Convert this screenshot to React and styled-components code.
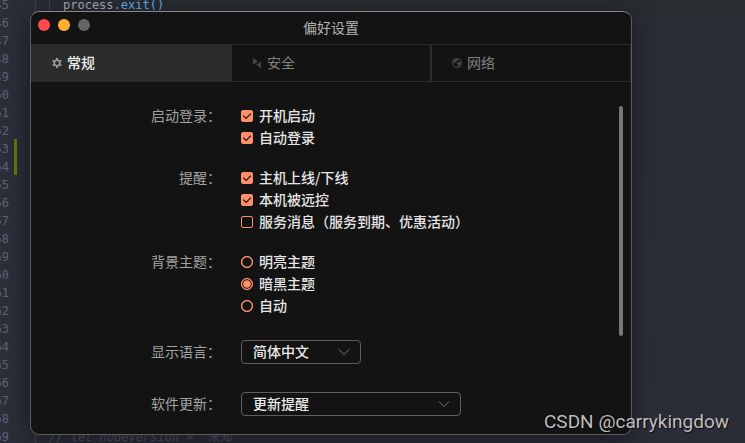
import React, { useState } from 'react';
import styled, { createGlobalStyle } from 'styled-components';

const GlobalStyle = createGlobalStyle`
  * {
    box-sizing: border-box;
  }
  body {
    margin: 0;
    background: #2a2d37;
    font-family: "Noto Sans CJK SC", sans-serif;
    font-size: 14px;
  }
`;

const Desktop = styled.main`
  position: relative;
  min-height: 100vh;
  padding: 11px 113px 8px 30px;
  overflow: hidden;
  background: linear-gradient(180deg, #292c31 0%, #2a2d36 60%, #2a2c37 100%);
`;

/* editor behind the window */
const Editor = styled.div`
  position: absolute;
  inset: -5px 0 0 0;
  overflow: hidden;
  background: linear-gradient(90deg, #2b2f3a 0, #282c34 30px, transparent 60px);
  font-family: "DejaVu Sans Mono", "Noto Sans CJK SC", monospace;
  font-size: 12px;
`;

const Line = styled.div`
  display: flex;
  height: 18px;
  line-height: 20px;
  white-space: pre;
`;

const LineNumber = styled.span`
  display: flex;
  flex: none;
  justify-content: flex-end;
  width: 9px;
  color: #5a637c;
`;

const ChangeMark = styled.span`
  flex: none;
  width: 3px;
  margin: 0 18px 0 5px;
  background: ${props => (props.$changed ? '#587c0c' : 'transparent')};
`;

const Indent = styled.span`
  flex: none;
  width: 14px;
  border-left: 1px solid #3a404b;
`;

const Code = styled.code`
  font-family: inherit;
  color: ${props => props.$color || '#a4abb8'};
  font-style: ${props => (props.$comment ? 'italic' : 'normal')};
`;

const Window = styled.section`
  position: relative;
  overflow: hidden;
  background: #131313;
  border: 1px solid #5c5c5c;
  border-top-color: #868686;
  border-radius: 9px;
`;

const Shadow = styled.div`
  position: relative;
  border-radius: 9px;
  box-shadow: 0 4px 24px rgba(0, 0, 0, 0.4);
`;

const TitleBar = styled.header`
  display: grid;
  grid-template-columns: 1fr auto 1fr;
  align-items: start;
  height: 32px;
  padding: 7px;
`;

const Lights = styled.div`
  display: flex;
  gap: 8px;
`;

const Light = styled.button`
  width: 12px;
  height: 12px;
  padding: 0;
  border: 0;
  border-radius: 50%;
  background: ${props => props.$color};
`;

const Title = styled.h1`
  margin: 0;
  color: #b4b4b4;
  font-size: 14px;
  font-weight: 400;
  line-height: 16px;
`;

const Tabs = styled.nav`
  display: grid;
  grid-template-columns: repeat(3, 1fr);
`;

const Tab = styled.button`
  display: flex;
  align-items: center;
  gap: 5px;
  height: 38px;
  padding: 0 20px;
  border: 1px solid #2b2b2b;
  background: ${props => (props.$active ? '#2b2b2b' : 'transparent')};
  color: ${props => (props.$active ? '#ececec' : '#808080')};
  font-family: inherit;
  font-size: 14px;
  font-weight: ${props => (props.$active ? 500 : 400)};

  svg {
    flex: none;
    color: ${props => (props.$active ? '#9a9a9a' : '#444')};
  }
`;

const Text = styled.span`
  padding-bottom: 2px;
  line-height: 20px;
`;

const Body = styled.div`
  display: flex;
  padding: 23px 8px 13px 0;
`;

const Form = styled.form`
  display: flex;
  flex: 1;
  flex-direction: column;
  gap: 18px;
`;

const Group = styled.div`
  display: grid;
  grid-template-columns: 190px 1fr;
  column-gap: 20px;
  min-height: 34px;
  align-items: ${props => (props.$center ? 'center' : 'start')};
`;

const GroupLabel = styled.label`
  padding-bottom: 2px;
  color: #a2a2a2;
  line-height: 20px;
  text-align: right;
`;

const Option = styled.label`
  display: flex;
  align-items: center;
  gap: 6px;
  color: #e6e6e6;
  font-weight: 500;
`;

const Mark = styled.span`
  display: grid;
  flex: none;
  width: 12px;
  height: 12px;

  > * {
    grid-area: 1 / 1;
  }
  svg {
    pointer-events: none;
  }
`;

const Check = styled.input`
  appearance: none;
  width: 12px;
  height: 12px;
  margin: 0;
  border: 1px solid #ff8f6b;
  border-radius: ${props => (props.type === 'radio' ? '50%' : '2px')};

  &[type='checkbox']:checked {
    background: #ff8f6b;
  }
`;

const SelectBox = styled.div`
  display: grid;
  align-items: center;
  width: ${props => props.$width};

  > * {
    grid-area: 1 / 1;
  }
  svg {
    justify-self: end;
    margin-right: 11px;
    pointer-events: none;
  }
`;

const Select = styled.select`
  appearance: none;
  width: 100%;
  height: 24px;
  padding: 0 11px 2px;
  border: 1px solid #5e5e5e;
  border-radius: 4px;
  background: #131313;
  color: #ececec;
  font-family: inherit;
  font-size: 14px;
  font-weight: 500;
  line-height: 20px;
`;

const Thumb = styled.div`
  flex: none;
  width: 4px;
  height: 230px;
  margin-top: 1px;
  border-radius: 2px;
  background: #767676;
`;

const Watermark = styled.div`
  position: absolute;
  right: 16px;
  bottom: 9px;
  color: #bdbdbd;
  font-family: Roboto, "Liberation Sans", sans-serif;
  font-size: 19px;
  line-height: 24px;
  text-shadow: 1px 1px 1px rgba(0, 0, 0, 0.7);
`;

function GearIcon() {
  return (
    <svg width="10" height="10" viewBox="0 0 10 10">
      <circle cx="5" cy="5" r="2.8" fill="none" stroke="currentColor" strokeWidth="1.7" />
      <path d="M5 0v1.8M5 8.2V10M.7 2.5l1.5.9M7.8 6.6l1.5.9M.7 7.5l1.5-.9M7.8 3.4l1.5-.9" stroke="currentColor" strokeWidth="2" />
    </svg>
  );
}

function SafetyIcon() {
  return (
    <svg width="10" height="10" viewBox="0 0 10 10" fill="currentColor">
      <path d="M1 0l5 3.4L1 7z" />
      <path d="M9 3.4v6.8L4.3 6.8z" />
    </svg>
  );
}

function GlobeIcon() {
  return (
    <svg width="10" height="10" viewBox="0 0 10 10" fill="none" stroke="currentColor">
      <circle cx="5" cy="5" r="4.4" strokeWidth="1.1" />
      <path d="M.8 3.2L3 1l3.2.3-.8 1.5-1.7.6-.6 1.4-2 .1zM6 4.2l2.6-.5.4 2-1.8 2.6-1-.4V6.3L4.8 5.4z" fill="currentColor" strokeWidth=".4" />
    </svg>
  );
}

function Tick() {
  return (
    <svg width="12" height="12" viewBox="0 0 12 12" fill="none">
      <path d="M2.2 5.6l2.9 2.9 4.8-4.9" stroke="#131313" strokeWidth="1.2" />
    </svg>
  );
}

function Ring({ filled }) {
  return (
    <svg width="12" height="12" viewBox="0 0 12 12" fill="none">
      <circle cx="6" cy="6" r="5.4" stroke="#ff8f6b" strokeWidth={filled ? 1 : 1.2} />
      {filled && <circle cx="6" cy="6" r="3.8" fill="#ff8f6b" />}
    </svg>
  );
}

function Arrow() {
  return (
    <svg width="12" height="8" viewBox="0 0 12 8" fill="none">
      <path d="M1 1.5l5 5 5-5" stroke="#7a7a7a" />
    </svg>
  );
}

const lines = Array.from({ length: 25 }, (_, i) => 45 + i);

const tabs = [
  { name: '常规', Icon: GearIcon },
  { name: '安全', Icon: SafetyIcon },
  { name: '网络', Icon: GlobeIcon },
];

function Choice({ type, name, checked, onChange, children }) {
  return (
    <Option>
      <Mark>
        <Check type={type} name={name} checked={checked} onChange={onChange} />
        {type === 'checkbox' && checked && <Tick />}
        {type === 'radio' && <Ring filled={checked} />}
      </Mark>
      <Text>{children}</Text>
    </Option>
  );
}

function EditorLines() {
  return (
    <Editor>
      {lines.map(n => (
        <Line key={n}>
          <LineNumber>{n}</LineNumber>
          <ChangeMark $changed={n === 53 || n === 54} />
          <Indent />
          {n === 45 && <><Indent /><Code>process.</Code><Code $color="#61afef">exit()</Code></>}
          {n === 69 && <Code $comment $color="#4a505a">{"// let nodeVersion = '未知'"}</Code>}
        </Line>
      ))}
    </Editor>
  );
}

export default function App() {
  const [tab, setTab] = useState('常规');
  const [theme, setTheme] = useState('暗黑主题');
  const [checks, setChecks] = useState({
    '开机启动': true,
    '自动登录': true,
    '主机上线/下线': true,
    '本机被远控': true,
    '服务消息（服务到期、优惠活动）': false,
  });

  const renderCheck = name => (
    <Choice
      key={name}
      type="checkbox"
      name={name}
      checked={checks[name]}
      onChange={() => setChecks({ ...checks, [name]: !checks[name] })}
    >
      {name}
    </Choice>
  );

  return (
    <Desktop lang="zh-CN">
      <GlobalStyle />
      <EditorLines />
      <Shadow>
        <Window>
          <TitleBar>
            <Lights>
              <Light $color="#ff4a4d" aria-label="关闭" />
              <Light $color="#ffb02e" aria-label="最小化" />
              <Light $color="#656565" aria-label="缩放" />
            </Lights>
            <Title>偏好设置</Title>
          </TitleBar>
          <Tabs>
            {tabs.map(({ name, Icon }) => (
              <Tab key={name} $active={tab === name} onClick={() => setTab(name)}>
                <Icon />
                <Text>{name}</Text>
              </Tab>
            ))}
          </Tabs>
          <Body>
            <Form>
              <Group>
                <GroupLabel as="span">启动登录：</GroupLabel>
                <div>{['开机启动', '自动登录'].map(renderCheck)}</div>
              </Group>
              <Group>
                <GroupLabel as="span">提醒：</GroupLabel>
                <div>{['主机上线/下线', '本机被远控', '服务消息（服务到期、优惠活动）'].map(renderCheck)}</div>
              </Group>
              <Group>
                <GroupLabel as="span">背景主题：</GroupLabel>
                <div>
                  {['明亮主题', '暗黑主题', '自动'].map(name => (
                    <Choice key={name} type="radio" name="theme" checked={theme === name} onChange={() => setTheme(name)}>
                      {name}
                    </Choice>
                  ))}
                </div>
              </Group>
              <Group $center>
                <GroupLabel htmlFor="language">显示语言：</GroupLabel>
                <SelectBox $width="120px">
                  <Select id="language">
                    <option>简体中文</option>
                  </Select>
                  <Arrow />
                </SelectBox>
              </Group>
              <Group $center>
                <GroupLabel htmlFor="update">软件更新：</GroupLabel>
                <SelectBox $width="220px">
                  <Select id="update">
                    <option>更新提醒</option>
                  </Select>
                  <Arrow />
                </SelectBox>
              </Group>
            </Form>
            <Thumb />
          </Body>
        </Window>
      </Shadow>
      <Watermark>CSDN @carrykingdow</Watermark>
    </Desktop>
  );
}
